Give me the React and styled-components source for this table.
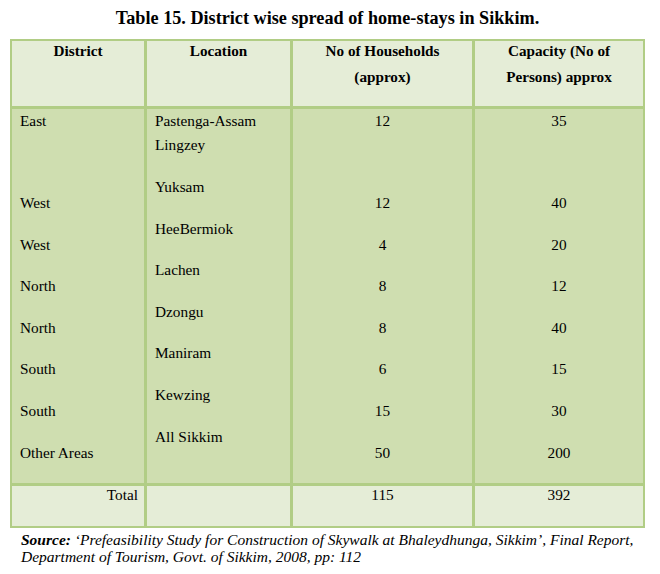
import React from "react";
import styled, { createGlobalStyle } from "styled-components";

const Global = createGlobalStyle`
  html, body { margin: 0; padding: 0; background: #ffffff; }
  body { font-family: "Liberation Serif", "DejaVu Serif", serif; color: #000; }
`;

const Page = styled.div`
  width: 660px;
  padding: 7px 0 0 10px;
  box-sizing: border-box;
  font-family: "Liberation Serif", "DejaVu Serif", serif;
`;

const Title = styled.h1`
  margin: 0 0 10px;
  width: 635px;
  text-align: center;
  font-size: 18.2px;
  line-height: 22px;
  font-weight: bold;
`;

const Table = styled.div`
  display: grid;
  grid-template-columns: 132px 143px 179px 168px;
  grid-template-rows: 65px 374px 40px;
  gap: 3px;
  padding: 2px;
  width: 635px;
  box-sizing: border-box;
  background: #b1cd85;
`;

const Cell = styled.div`
  background: ${(p) => (p.$tone === "light" ? "#e5edd7" : "#cfdeb0")};
  padding: ${(p) => p.$pad || "0 8px"};
  text-align: ${(p) => p.$align || "left"};
  font-size: 15.3px;
  box-sizing: border-box;
`;

const HeadText = styled.div`
  margin-top: -3px;
  font-weight: bold;
  font-size: 15.2px;
  line-height: 26px;
  text-align: center;
  white-space: nowrap;
`;

const Line = styled.div`
  line-height: ${(p) => (p.$tall ? "41.6px" : "24px")};
  margin-top: ${(p) => p.$gap || 0}px;
  white-space: nowrap;
`;

const TotalText = styled.div`
  line-height: 18px;
`;

const Source = styled.p`
  margin: 3px 0 0 11px;
  font-style: italic;
  font-size: 15.5px;
  line-height: 17px;
  white-space: nowrap;
`;

const districts = ["West", "West", "North", "North", "South", "South", "Other Areas"];
const locations = ["Yuksam", "HeeBermiok", "Lachen", "Dzongu", "Maniram", "Kewzing", "All Sikkim"];
const households = ["12", "4", "8", "8", "6", "15", "50"];
const capacity = ["40", "20", "12", "40", "15", "30", "200"];

function TallColumn({ first, items, align }) {
  return (
    <Cell $align={align}>
      <Line>{first}</Line>
      {items.map((t, i) => (
        <Line key={i} $tall $gap={i === 0 ? 49 : 0}>
          {t}
        </Line>
      ))}
    </Cell>
  );
}

export default function App() {
  return (
    <>
      <Global />
      <Page>
        <Title>Table 15. District wise spread of home-stays in Sikkim.</Title>
        <Table>
          <Cell $tone="light">
            <HeadText>District</HeadText>
          </Cell>
          <Cell $tone="light">
            <HeadText>Location</HeadText>
          </Cell>
          <Cell $tone="light">
            <HeadText>
              No of Households
              <br />
              (approx)
            </HeadText>
          </Cell>
          <Cell $tone="light">
            <HeadText>
              Capacity (No of
              <br />
              Persons) approx
            </HeadText>
          </Cell>

          <TallColumn first="East" items={districts} align="left" />
          <Cell>
            <Line>Pastenga-Assam</Line>
            <Line>Lingzey</Line>
            {locations.map((t, i) => (
              <Line key={t} $tall $gap={i === 0 ? 9 : 0}>
                {t}
              </Line>
            ))}
          </Cell>
          <TallColumn first="12" items={households} align="center" />
          <TallColumn first="35" items={capacity} align="center" />

          <Cell $tone="light" $align="right" $pad="0 6px 0 8px">
            <TotalText>Total</TotalText>
          </Cell>
          <Cell $tone="light" />
          <Cell $tone="light" $align="center">
            <TotalText>115</TotalText>
          </Cell>
          <Cell $tone="light" $align="center">
            <TotalText>392</TotalText>
          </Cell>
        </Table>
        <Source>
          <b>Source:</b> ‘Prefeasibility Study for Construction of Skywalk at Bhaleydhunga, Sikkim’, Final Report,
          <br />
          Department of Tourism, Govt. of Sikkim, 2008, pp: 112
        </Source>
      </Page>
    </>
  );
}
